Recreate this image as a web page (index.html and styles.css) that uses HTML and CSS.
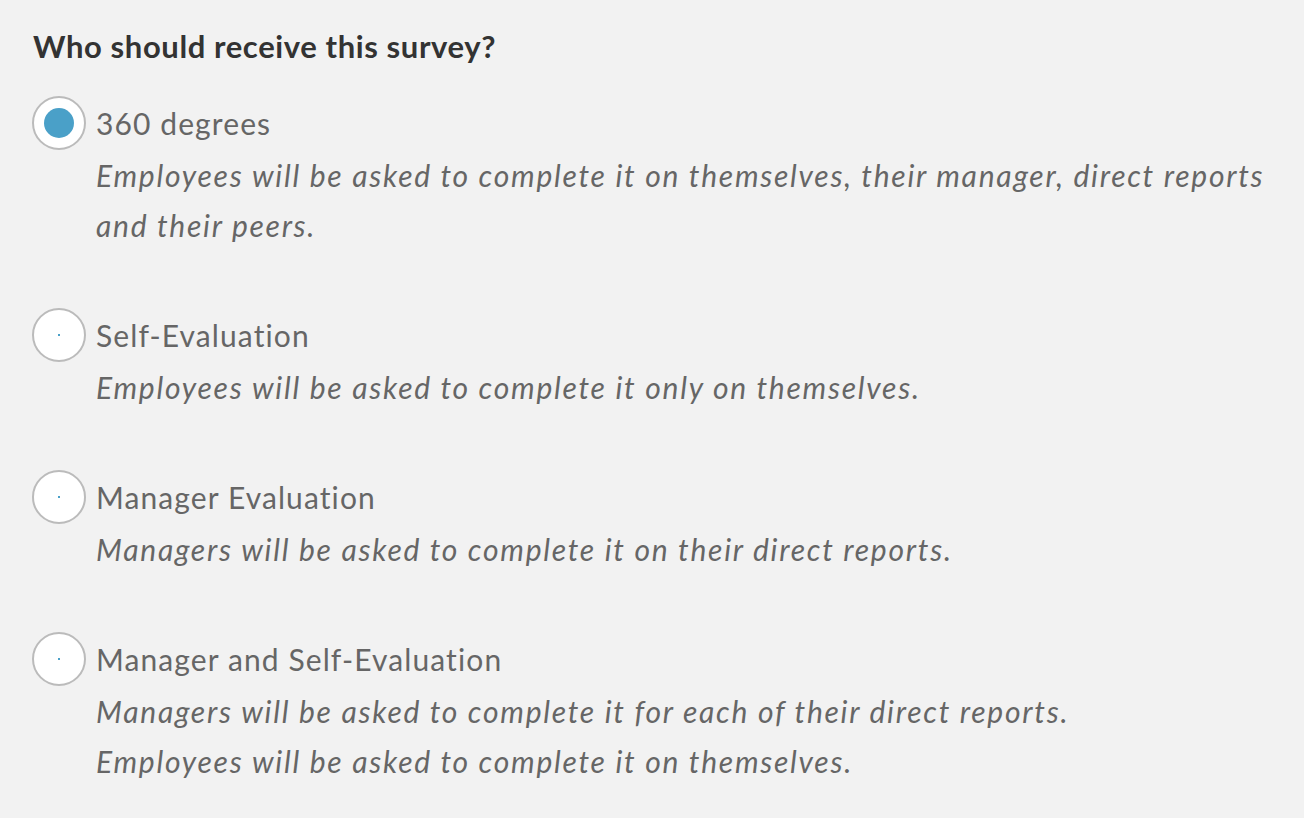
FILE: index.html
```html
<!doctype html>
<html>
<head>
    <title>Survey recipients</title>
    <meta charset="utf-8"/>
    <link rel="stylesheet" href="styles.css">
</head>
<body>
    <div class="panel">
        <h2 class="question">Who should receive this survey?</h2>

        <div class="option">
            <span class="radio checked"><span class="dot"></span></span>
            <div class="option-text">
                <div class="label">360 degrees</div>
                <div class="desc">Employees will be asked to complete it on themselves, their manager, direct reports and their peers.</div>
            </div>
        </div>

        <div class="option">
            <span class="radio"><span class="dot"></span></span>
            <div class="option-text">
                <div class="label">Self-Evaluation</div>
                <div class="desc">Employees will be asked to complete it only on themselves.</div>
            </div>
        </div>

        <div class="option">
            <span class="radio"><span class="dot"></span></span>
            <div class="option-text">
                <div class="label">Manager Evaluation</div>
                <div class="desc">Managers will be asked to complete it on their direct reports.</div>
            </div>
        </div>

        <div class="option">
            <span class="radio"><span class="dot"></span></span>
            <div class="option-text">
                <div class="label">Manager and Self-Evaluation</div>
                <div class="desc">Managers will be asked to complete it for each of their direct reports.<br>
                Employees will be asked to complete it on themselves.</div>
            </div>
        </div>
    </div>
</body>
</html>
```

FILE: styles.css
```css
body {
    margin: 0;
    background-color: #f2f2f2;
    font-family: Lato, "Open Sans", sans-serif;
}
.panel {
    padding: 24px 32px 0 32px;
}
.question {
    margin: 0 0 28px 1px;
    font-size: 31px;
    font-weight: bold;
    letter-spacing: 0.6px;
    color: #333333;
    line-height: 44px;
}
.option {
    display: flex;
    align-items: flex-start;
    margin-bottom: 58px;
}
.radio {
    flex: none;
    width: 50px;
    height: 50px;
    border: 2px solid #bbbbbb;
    border-radius: 50%;
    background-color: white;
    display: flex;
    align-items: center;
    justify-content: center;
}
.dot {
    width: 2px;
    height: 2px;
    background-color: #4aa0c8;
}
.radio.checked .dot {
    width: 30px;
    height: 30px;
    border-radius: 50%;
}
.option-text {
    margin-left: 10px;
    color: #666666;
}
.label {
    font-size: 30px;
    letter-spacing: 1.1px;
    line-height: 54px;
}
.desc {
    font-size: 30px;
    font-style: italic;
    letter-spacing: 1.75px;
    line-height: 50px;
}
```
